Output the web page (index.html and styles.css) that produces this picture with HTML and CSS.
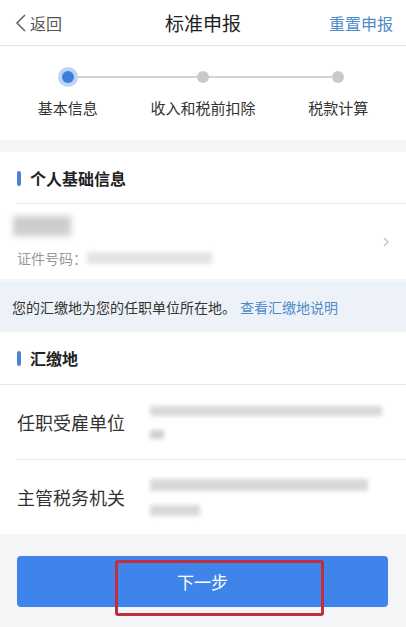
FILE: index.html
```html
<!DOCTYPE html>
<html lang="zh-CN">
<head>
    <meta charset="UTF-8">
    <meta name="viewport" content="width=device-width, initial-scale=1.0">
    <title>标准申报</title>
    <link rel="stylesheet" href="styles.css">
</head>
<body>
    <div class="page">
        <div class="header">
            <div class="back">
                <svg width="12" height="20" viewBox="0 0 12 20"><path d="M10 2 L2 10 L10 18" fill="none" stroke="#666" stroke-width="1.6"/></svg>
                <span>返回</span>
            </div>
            <div class="title">标准申报</div>
            <div class="reset">重置申报</div>
        </div>

        <div class="steps">
            <div class="track">
                <div class="line"></div>
                <div class="step"><span class="dot active"></span></div>
                <div class="step"><span class="dot"></span></div>
                <div class="step"><span class="dot"></span></div>
            </div>
            <div class="labels">
                <div class="label">基本信息</div>
                <div class="label">收入和税前扣除</div>
                <div class="label">税款计算</div>
            </div>
        </div>

        <div class="card personal">
            <div class="section-title"><span class="bar"></span>个人基础信息</div>
            <div class="person-row">
                <div class="person-info">
                    <div class="blur name-blur"></div>
                    <div class="id-line">证件号码：<span class="blur id-blur"></span></div>
                </div>
                <svg width="8" height="12" viewBox="0 0 8 12"><path d="M2 2 L6 6 L2 10" fill="none" stroke="#c8c8c8" stroke-width="1.6"/></svg>
            </div>
        </div>

        <div class="notice">您的汇缴地为您的任职单位所在地。<span class="link">查看汇缴地说明</span></div>

        <div class="card">
            <div class="section-title"><span class="bar"></span>汇缴地</div>
            <div class="field">
                <div class="field-label">任职受雇单位</div>
                <div class="field-value">
                    <div class="blur v-long"></div>
                    <div class="blur v-short"></div>
                </div>
            </div>
            <div class="field">
                <div class="field-label">主管税务机关</div>
                <div class="field-value">
                    <div class="blur v-long2"></div>
                    <div class="blur v-mid"></div>
                </div>
            </div>
        </div>

        <div class="footer">
            <button class="next">下一步</button>
            <div class="mark"></div>
        </div>
    </div>
</body>
</html>
```

FILE: styles.css
```css
body {
    margin: 0;
    padding: 0;
    font-family: "Noto Sans CJK SC", "Noto Sans", sans-serif;
    background-color: #f5f6f8;
}
.page {
    width: 406px;
    height: 627px;
    position: relative;
    background-color: #f5f6f8;
    overflow: hidden;
}
.header {
    height: 45px;
    background-color: #fff;
    border-bottom: 1px solid #e4e4e4;
    display: flex;
    align-items: center;
    justify-content: space-between;
    padding: 0 13px 0 15px;
    position: relative;
}
.back {
    display: flex;
    align-items: center;
    gap: 3px;
    font-size: 16px;
    color: #555;
}
.title {
    position: absolute;
    left: 0;
    right: 0;
    text-align: center;
    font-size: 19px;
    color: #222;
    pointer-events: none;
}
.reset {
    font-size: 16px;
    color: #4f8bc9;
}
.steps {
    background-color: #fff;
    height: 94px;
    padding-top: 20px;
    box-sizing: border-box;
    margin-bottom: 12px;
}
.track {
    display: flex;
    position: relative;
    height: 22px;
    align-items: center;
}
.step {
    flex: 1;
    display: flex;
    justify-content: center;
}
.line {
    position: absolute;
    left: 68px;
    right: 68px;
    top: 10px;
    height: 2px;
    background-color: #d4d4d4;
}
.dot {
    width: 12px;
    height: 12px;
    border-radius: 50%;
    background-color: #c9c9c9;
    position: relative;
}
.dot.active {
    background-color: #3b7fe1;
    box-shadow: 0 0 0 4px #bcd5f5;
}
.labels {
    display: flex;
    margin-top: 9px;
}
.label {
    flex: 1;
    text-align: center;
    font-size: 15px;
    color: #333;
}
.card {
    background-color: #fff;
}
.section-title {
    height: 52px;
    display: flex;
    align-items: center;
    padding-left: 17px;
    font-size: 16px;
    font-weight: bold;
    color: #222;
    border-bottom: 1px solid #e8e8e8;
}
.personal .section-title {
    border-bottom: none;
    position: relative;
}
.personal .section-title::after {
    content: "";
    position: absolute;
    left: 16px;
    right: 0;
    bottom: 0;
    height: 1px;
    background-color: #e8e8e8;
}
.bar {
    width: 4px;
    height: 15px;
    border-radius: 2px;
    background-color: #4a82d6;
    margin-right: 9px;
}
.person-row {
    height: 75px;
    display: flex;
    align-items: center;
    justify-content: space-between;
    padding: 0 16px 0 17px;
}
.person-info {
    display: flex;
    flex-direction: column;
    gap: 12px;
}
.blur {
    background-color: #d8d8d8;
    filter: blur(2px);
}
.name-blur {
    width: 58px;
    height: 20px;
    margin-left: -4px;
    background-color: #cdcdcd;
    filter: blur(3px);
}
.id-line {
    font-size: 14px;
    color: #999;
    display: flex;
    align-items: center;
}
.id-blur {
    display: inline-block;
    width: 125px;
    height: 12px;
    background-color: #e4e4e4;
}
.notice {
    margin-top: 3px;
    height: 50px;
    background-color: #edf2f9;
    display: flex;
    align-items: center;
    padding-left: 12px;
    font-size: 14px;
    color: #333;
}
.link {
    color: #4f8bc9;
    margin-left: 4px;
}
.field {
    height: 74px;
    display: flex;
    align-items: center;
    margin-left: 17px;
    border-bottom: 1px solid #ececec;
}
.field:last-child {
    border-bottom: none;
}
.field-label {
    width: 133px;
    font-size: 18px;
    color: #333;
}
.field-value {
    display: flex;
    flex-direction: column;
    gap: 14px;
}
.v-long {
    width: 232px;
    height: 10px;
}
.v-short {
    width: 14px;
    height: 9px;
    background-color: #cfcfcf;
}
.v-long2 {
    width: 218px;
    height: 12px;
}
.v-mid {
    width: 50px;
    height: 11px;
}
.footer {
    height: 92px;
    padding: 22px 18px 0 17px;
    box-sizing: border-box;
    position: relative;
}
.next {
    width: 100%;
    height: 51px;
    background-color: #3f84ea;
    border: none;
    border-radius: 4px;
    color: #fff;
    font-family: "Noto Sans CJK SC", sans-serif;
    font-size: 17px;
}
.mark {
    position: absolute;
    left: 115px;
    top: 26px;
    width: 209px;
    height: 56px;
    border: 3px solid #c0303c;
    border-radius: 3px;
    box-sizing: border-box;
}
```
